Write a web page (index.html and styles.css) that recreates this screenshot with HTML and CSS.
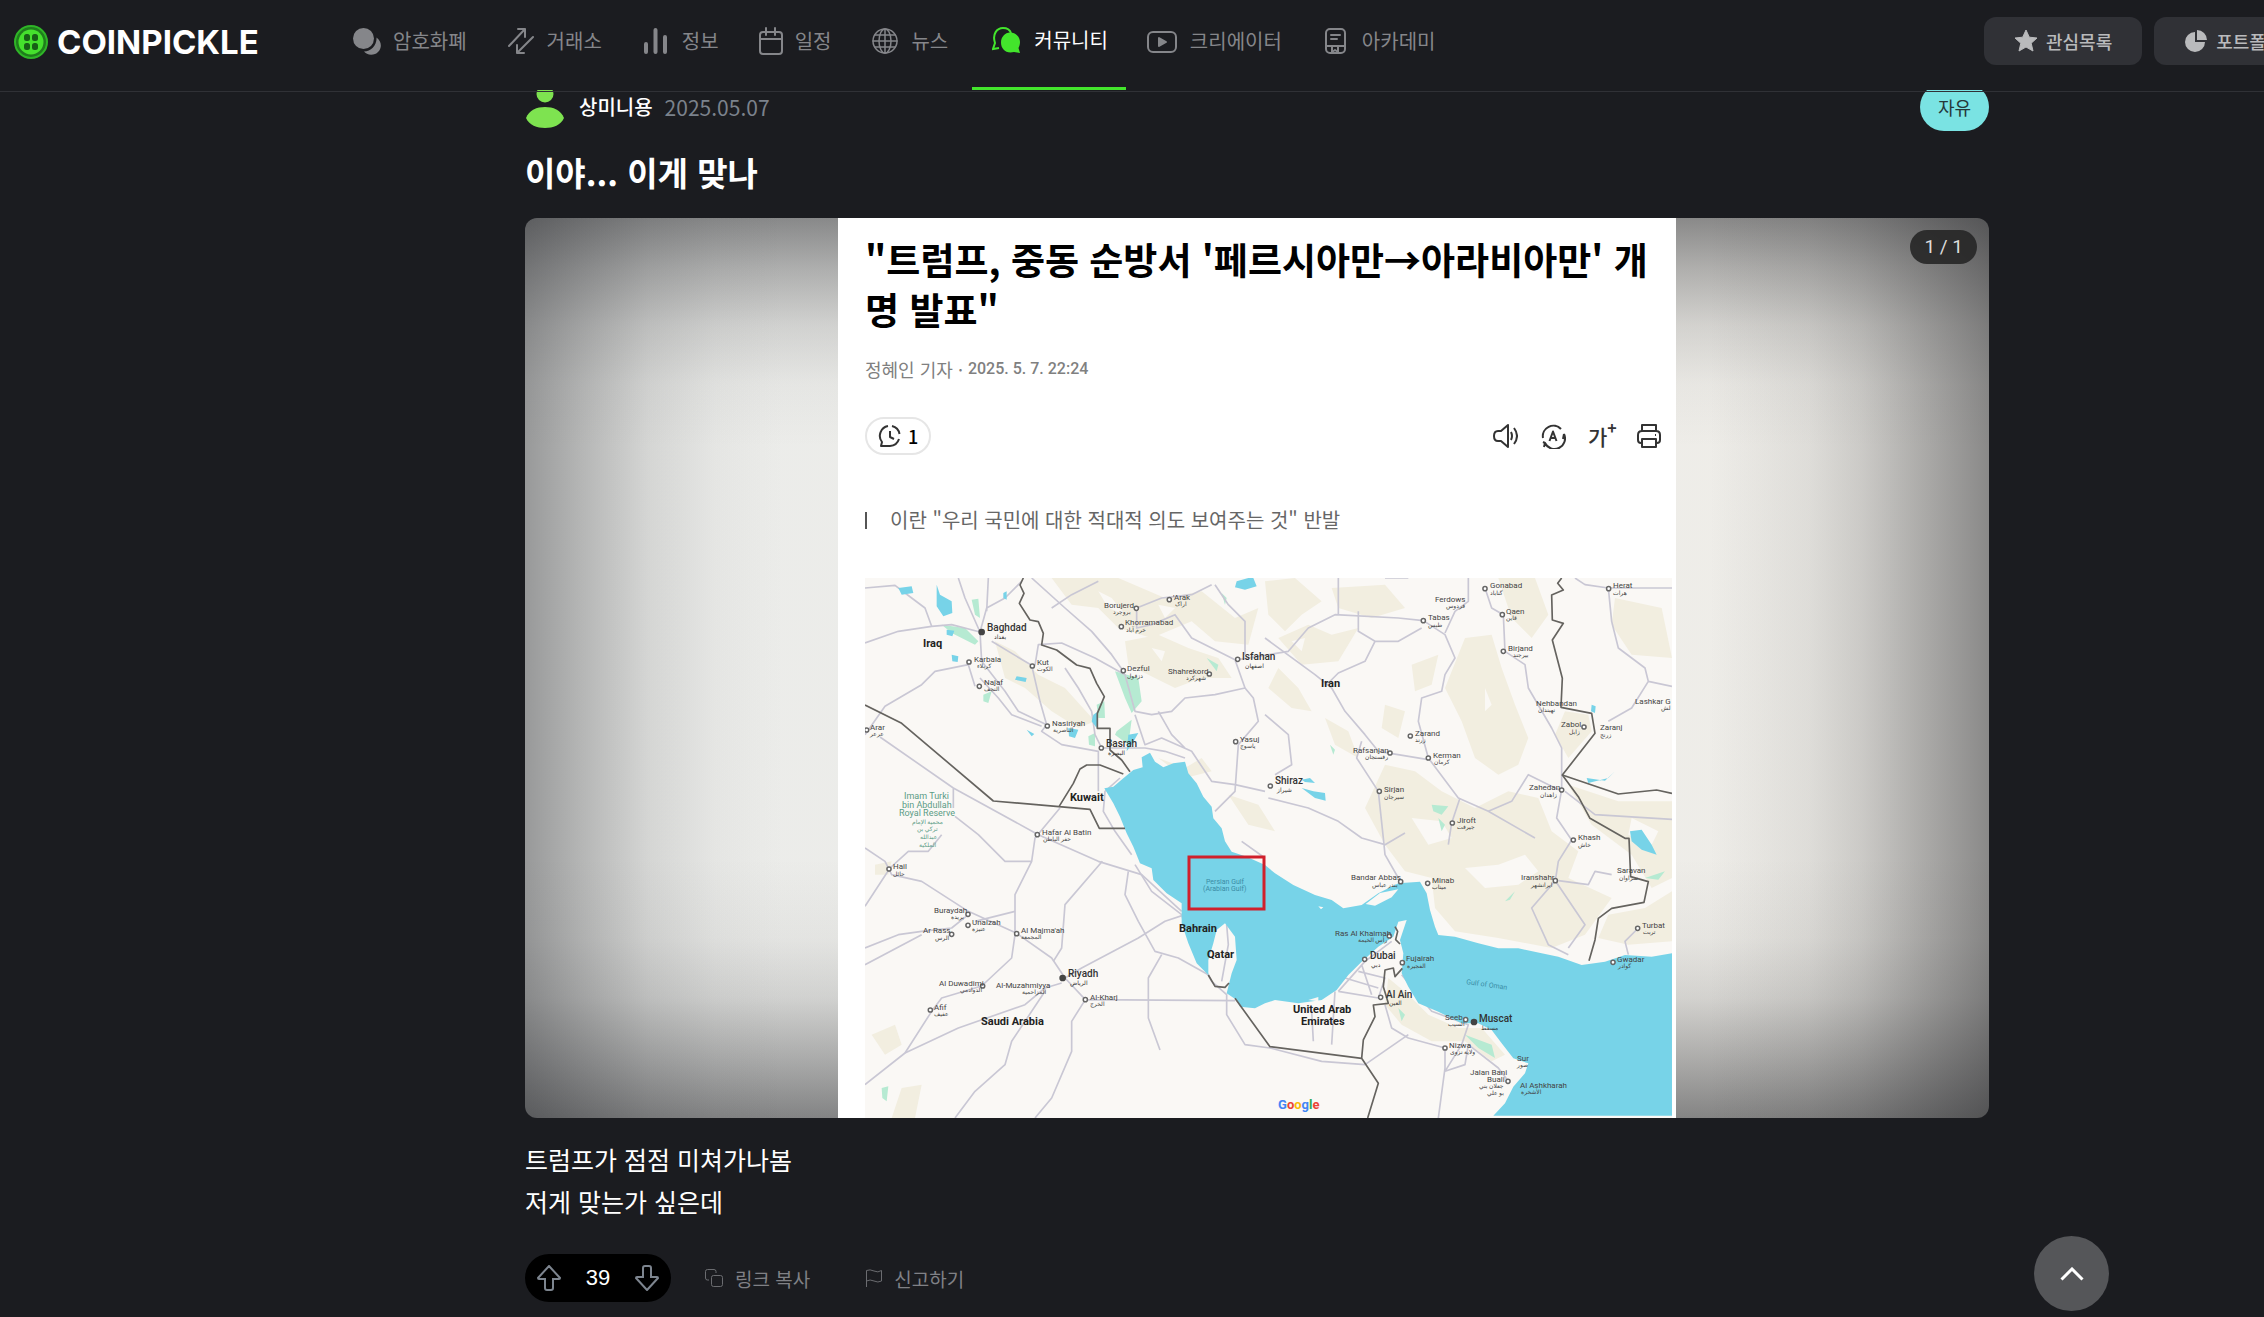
FILE: index.html
```html
<!DOCTYPE html>
<html lang="ko">

<head>
    <meta charset="UTF-8">
    <meta name="viewport" content="width=device-width, initial-scale=1.0">
    <title>이야... 이게 맞나 - COINPICKLE</title>
    <link rel="stylesheet" href="styles.css">
</head>

<body>
    <!-- 상단 메뉴 -->
    <header class="header">
        <a href="#" class="logo">
            <svg width="36" height="36" viewBox="0 0 36 36">
                <circle cx="18" cy="18" r="16" fill="#1f7d1c" stroke="#2fb527" stroke-width="2" />
                <circle cx="18" cy="18" r="12.5" fill="#45e12d" />
                <g fill="#176016">
                    <rect x="11" y="10" width="6" height="7" rx="2.5" />
                    <rect x="19" y="10" width="6" height="7" rx="2.5" />
                    <rect x="11" y="19" width="6" height="7" rx="2.5" />
                    <rect x="19" y="19" width="6" height="7" rx="2.5" />
                </g>
            </svg>
            <span>COINPICKLE</span>
        </a>

        <nav class="gnb">
            <a href="#">
                <svg class="ico" viewBox="0 0 28 28">
                    <ellipse cx="10.500" cy="11.500" rx="10.500" ry="10.500" fill="currentColor" />
                    <path d="M11 24.500C18 24.500 24 18 23.500 10.500C30 15 29 24 22 27C18 28.500 13 27.500 11 24.500Z" fill="currentColor" />
                </svg>
                <span>암호화폐</span>
            </a>
            <a href="#">
                <svg class="ico line" viewBox="0 0 28 28">
                    <path d="M2 19L18 2M11 2H18V10M26 10L10 26M10 18V26H17" />
                </svg>
                <span>거래소</span>
            </a>
            <a href="#">
                <svg class="ico" viewBox="0 0 28 28">
                    <path d="M4 17V25M13.500 3V25M23 10V25" fill="none" stroke="currentColor" stroke-width="4" stroke-linecap="round" />
                </svg>
                <span>정보</span>
            </a>
            <a href="#">
                <svg class="ico line narrow" viewBox="2 0 24 28">
                    <rect x="3" y="5" width="22" height="22" rx="3" />
                    <path d="M3 12H25M9 1V8M18 1V8" />
                </svg>
                <span>일정</span>
            </a>
            <a href="#">
                <svg class="ico line globe" viewBox="0 0 28 28">
                    <circle cx="14" cy="14" r="12" />
                    <ellipse cx="14" cy="14" rx="6" ry="12" />
                    <path d="M14 2V26M2 14H26M4 8H24M4 20H24" />
                </svg>
                <span>뉴스</span>
            </a>
            <a href="#" class="on">
                <svg class="ico" viewBox="0 0 28 28">
                    <path d="M7 22L1 23L3 17C0 8 5 2 11 2C15 2 18 4 19 7" fill="none" stroke="#43e52c" stroke-width="2" />
                    <path d="M18 6.500C24 6.500 28 11 28 16C28 19 27 21 26.500 22L28 27L22 26C14 28 9 23 9 16.500C9 11 13 6.500 18 6.500Z" fill="#43e52c" />
                </svg>
                <span>커뮤니티</span>
            </a>
            <a href="#">
                <svg class="ico line wide" viewBox="-2 0 32 28">
                    <rect x="0" y="5" width="28" height="20" rx="5" />
                    <path d="M11 11V19L18 15Z" fill="currentColor" />
                </svg>
                <span>크리에이터</span>
            </a>
            <a href="#">
                <svg class="ico line" viewBox="0 0 28 28">
                    <rect x="4" y="2" width="19" height="24" rx="4" />
                    <path d="M9 8H18M9 12H15M4 19H23M10 19V25L13 23L16 25V19" />
                </svg>
                <span>아카데미</span>
            </a>
        </nav>

        <div class="user-menu">
            <button type="button">
                <svg width="24" height="24" viewBox="0 0 24 24">
                    <path d="M12 1L15.300 8.200L23 9L17.200 14.200L19 22L12 18L5 22L6.800 14.200L1 9L8.700 8.200Z" fill="#b9babc" stroke="#b9babc" stroke-linejoin="round" />
                </svg>
                <span>관심목록</span>
            </button>
            <button type="button">
                <svg width="24" height="24" viewBox="0 0 24 24">
                    <path d="M11 3A10 10 0 1 0 21 13H11Z" fill="#b9babc" />
                    <path d="M13 1A10 10 0 0 1 23 11H13Z" fill="#b9babc" />
                </svg>
                <span>포트폴리오</span>
            </button>
        </div>
    </header>

    <!-- 게시글 -->
    <main class="post">
        <div class="writer">
            <svg width="40" height="42" viewBox="0 0 40 42" fill="#7ee350">
                <circle cx="20" cy="8" r="8.500" />
                <path d="M1 32C4 24 12 21 20 21S36 24 39 32C36 39 28 42 20 42S4 39 1 32Z" />
            </svg>
            <strong>상미니용</strong>
            <time datetime="2025-05-07">2025.05.07</time>
            <a href="#" class="tag">자유</a>
        </div>

        <h1>이야... 이게 맞나</h1>

        <div class="gallery">
            <span class="count">1 / 1</span>

            <article class="news">
                <h2>"트럼프, 중동 순방서 '페르시아만→아라비아만' 개<br>명 발표"</h2>
                <p class="meta">정혜인 기자 · <span>2025. 5. 7. 22:24</span></p>

                <div class="news-tools">
                    <button type="button" class="reply">
                        <svg width="24" height="24" viewBox="0 0 24 24">
                            <path d="M10 2A10 10 0 0 0 4 18L3 22H12A10 10 0 0 0 21 15M14 2A10 10 0 0 1 21.500 10M12 7V13L16 15" />
                        </svg>
                        <span>1</span>
                    </button>
                    <div class="news-icons">
                        <button type="button" aria-label="음성으로 듣기">
                            <svg width="26" height="26" viewBox="0 0 26 26">
                                <path d="M6 8H9L16 2V24L9 18H6Q2 18 2 13T6 8ZM19 9Q21 13 19 17M22 5Q28 13 22 21" />
                            </svg>
                        </button>
                        <button type="button" aria-label="번역">
                            <svg width="26" height="26" viewBox="0 0 26 26">
                                <path d="M3 15A10.500 10.500 0 0 1 21 6M24 11A10.500 10.500 0 0 1 5 20M3 19L5 20L4 24M23 16L24 11M9.500 18L13 8.500L16.500 18M10.500 15H15.500" />
                            </svg>
                        </button>
                        <button type="button" class="font-size">가<sup>+</sup></button>
                        <button type="button" aria-label="인쇄">
                            <svg width="26" height="26" viewBox="0 0 26 26">
                                <path d="M6 8V2H20V8M6 20H5Q2 20 2 17V12Q2 8 6 8H20Q24 8 24 12V17Q24 20 21 20H20M6 16H20V24H6ZM19 12H20" />
                            </svg>
                        </button>
                    </div>
                </div>

                <p class="quote">이란 "우리 국민에 대한 적대적 의도 보여주는 것" 반발</p>

                <!-- 지도 -->
                <svg class="map" viewBox="0 0 807 540">
                    <g transform="scale(.33333)">
                        <!-- 지형 -->
                        <g fill="#f2eee0">
                            <path d="M560 0L760 0L900 60L1010 40L1110 120L1180 90L1150 200L1050 190L980 130L860 180L760 150L700 90L620 80Z" />
                            <path d="M780 190L880 170L970 210L1060 240L1100 300L1010 300L930 330L850 290L790 260Z" />
                            <path d="M390 190L450 220L520 290L600 330L690 430L640 450L560 400L480 330L420 300Z" />
                            <path d="M1200 10L1290 0L1370 70L1310 110L1260 160L1210 110Z" />
                            <path d="M1240 180L1330 140L1400 170L1480 150L1420 250L1310 260Z" />
                            <path d="M1400 30L1560 20L1620 90L1520 120L1420 90Z" />
                            <path d="M1800 180L1880 170L1910 270L1950 380L1990 480L1960 560L1900 590L1830 540L1790 430L1740 330Z" />
                            <path d="M1560 560L1650 580L1730 640L1830 690L1930 640L2020 660L2060 760L2140 820L2110 900L2240 960L2160 1070L2060 1110L1900 1080L1770 1060L1710 990L1700 900L1620 880L1560 800L1500 690Z" />
                            <path d="M1900 0L2010 0L2050 110L2000 180L1940 120Z" />
                            <path d="M2250 60L2390 90L2421 240L2300 230L2240 140Z" />
                            <path d="M2100 400L2170 410L2180 460L2110 540L2070 470Z" />
                            <path d="M2110 620L2260 670L2421 670V900L2360 930L2300 830L2180 740Z" />
                            <path d="M2230 1010L2340 990L2421 940V1090L2290 1100L2200 1080Z" />
                            <path d="M1570 1200L1630 1250L1690 1310L1780 1350L1850 1350L1920 1430L1880 1450L1800 1390L1700 1390L1610 1340L1560 1280Z" />
                            <path d="M20 1370L90 1340L110 1400L60 1430ZM110 1530L170 1520L150 1620H80ZM30 860L80 850L70 890L30 890Z" />
                            <path d="M1240 270L1300 330L1340 400L1280 390L1210 330ZM1090 650L1180 680L1230 760L1150 740Z" />
                            <path d="M1640 260L1720 230L1700 320L1650 340ZM1380 420L1450 460L1480 540L1410 500ZM1560 380L1620 400L1600 480L1550 450ZM880 540L960 570L1010 540L1040 580L960 600Z" />
                        </g>
                        <g fill="#faf8f5">
                            <path d="M1800 870L1900 860L1980 830L2020 880L1960 920L1860 930Z" />
                            <path d="M1640 720L1730 730L1760 780L1690 800Z" />
                            <path d="M2300 720L2380 760L2360 800L2290 770Z" />
                            <path d="M700 40L740 60L780 110L730 90ZM880 80L930 90L900 120ZM860 210L900 220L890 250ZM1860 330L1880 380L1860 400ZM1280 190L1320 180L1310 220Z" />
                        </g>
                        <!-- 녹지 -->
                        <g fill="#b6ead2">
                            <path d="M320 65L340 62L345 120L330 110ZM750 280L820 300L830 370L800 405L780 360ZM755 460L800 425L790 500L750 470ZM355 350L380 340L370 375L355 370Z" />
                            <path d="M230 140L300 150L340 190L330 200L260 165ZM695 380L718 370L720 420L700 420ZM670 475L690 465L690 505L672 500Z" />
                            <path d="M1700 680L1750 685L1730 710L1705 700ZM1720 720L1740 740L1730 760ZM1920 970L1950 940L1935 965ZM2340 900L2400 880L2380 905ZM1800 1370L1880 1400L1890 1440L1840 1410ZM1600 1290L1620 1310L1610 1330ZM50 1530L70 1525L65 1570L52 1560Z" />
                            <path d="M1395 500L1410 515L1405 530ZM1025 240L1060 260L1055 280ZM1070 45L1085 60L1080 80Z" />
                        </g>
                        <!-- 도로 -->
                        <g class="road">
                            <path d="M0 30L90 22L140 60L180 90L200 145M0 195L100 160L200 145L260 140L345 162L350 250M345 162L365 90L420 60L470 10M345 162L300 60L280 0M370 0L365 100" />
                            <path d="M0 470L60 385L170 320L210 280L310 260L330 325M380 190L500 262L525 370L545 440M350 250L420 340L460 400L545 440L530 460L590 500L700 520L700 640M345 300L400 360L440 410L530 445" />
                            <path d="M510 262L520 200L590 195L690 240L780 290L810 400L860 410L920 400L960 360L1050 350L1140 330L1165 360L1180 430L1120 500L1110 640L1050 700" />
                            <path d="M500 0L600 90L680 160L740 230L775 280M560 90L620 50L700 10M815 90L890 60L980 50L1040 20M815 90L815 150L860 140L930 110L980 180L1110 245L1140 330M1050 20L1090 80L1140 130L1140 230" />
                            <path d="M600 270L640 330L680 400L690 470L710 510L840 510L900 520L960 540M810 410L840 500L890 480L980 520L1040 610L1110 620L1200 640M880 400L920 470L960 510" />
                            <path d="M1120 245L1270 220L1330 150L1410 110L1600 120L1675 128L1740 170L1770 240L1740 290L1730 340L1670 360L1660 430L1690 540L1780 660L1870 700L2010 780" />
                            <path d="M1200 180L1350 290L1400 330L1440 400L1500 470L1540 520L1690 545M1390 315L1420 285L1500 250L1530 190L1600 190L1670 150M1480 100V160L1530 190M1740 165L1770 100L1810 70L1810 0M1420 0L1420 110" />
                            <path d="M1490 490L1475 540L1540 640L1555 780L1560 830L1600 900M1200 410L1270 470L1280 560L1230 590M1210 660L1330 690L1420 730L1490 780L1560 800L1620 765M1785 660L1760 735L1750 800M1870 700L1940 670L1990 590L2090 640" />
                            <path d="M1860 30L1880 90L1915 110L1920 220L1980 260L1990 330L2060 450L2090 510L2090 635L2075 720L2120 786L2080 850L2071 908L2000 990L2050 1100L2110 1130M2071 908L2160 1040L2110 1110" />
                            <path d="M2130 0L2160 20L2230 30L2421 30M2230 30L2240 130L2260 210L2340 270L2350 310L2421 325M2350 310L2300 390L2230 430M2100 640L2190 710L2421 724M2080 908L2170 920L2190 880L2240 890M1630 0L1560 0M2320 1050L2280 1090L2290 1130" />
                            <path d="M45 477L265 630L520 770L700 850L830 890L950 1000M265 630L265 690M585 690L510 780L500 850L450 950L450 1070L440 1140L350 1224M270 715L340 770L420 850L500 850" />
                            <path d="M0 810L60 850L80 890L170 910L310 1000L455 1066L560 1140L600 1200M0 985L75 870L130 820L190 820L230 770M0 1110L100 1070L170 1060L260 1050L310 1010M0 1160L170 1070M330 1030L450 1000" />
                            <path d="M712 850L600 980L590 1110L565 1150M600 1200L650 1170L820 1080L900 1030L960 1010M790 880L780 950L820 1030L870 1120L940 1140L1030 1190M890 1130L850 1200L850 1320L885 1416M590 1215L540 1230L480 1280L280 1350L120 1425L0 1520" />
                            <path d="M350 1224L230 1260L200 1300L120 1425M540 1240L440 1390L420 1460L330 1540L270 1620M600 1200L661 1265L620 1330L620 1420L560 1560L510 1620M661 1265L1110 1268M810 860L860 940L950 1010L970 1080L1040 1210L1085 1250V1310L1140 1400L1215 1410" />
                            <path d="M765 600L720 640L715 700L750 760L800 830M1045 740L1090 830L1130 840M1130 790L1200 840" />
                            <path d="M1420 1240L1500 1150L1580 1090M1420 1240L1540 1260L1560 1200L1480 1180M1440 1200L1540 1230M1490 1160L1520 1250M1410 1240L1400 1400M1560 1280L1580 1350L1630 1380L1740 1410L1740 1470L1720 1620M1610 1190L1700 1300L1810 1340L1790 1400L1740 1480L1800 1460L1810 1400L1900 1470L1930 1510" />
                            <path d="M1340 1300L1345 1390M1215 1410L1370 1450L1500 1460L1630 1370M1085 1040L1090 1100L1070 1210" />
                        </g>
                        <!-- 바다 -->
                        <path fill="#77d3e8" d="M718 631L745 626L775 601L805 576L833 568L830 538L855 524L870 551L895 568L925 556L960 551L970 586L995 616L1015 656L1040 686L1045 721L1070 751L1080 790L1100 821L1145 836L1200 861L1230 886L1285 921L1350 951L1400 966L1435 991L1490 981L1540 946L1600 916L1665 911L1685 946L1695 996L1710 1046L1720 1071L1770 1076L1840 1096L1900 1111L1960 1111L2030 1126L2080 1136L2150 1161L2220 1151L2280 1131L2360 1136L2421 1126V1613H1885L1920 1576L1945 1526L1980 1486L1990 1456L1945 1441L1910 1396L1880 1356L1840 1336L1790 1336L1720 1301L1660 1276L1630 1226L1610 1186L1615 1126L1605 1086L1625 1026L1600 1031L1585 1076L1540 1106L1490 1151L1450 1191L1415 1236L1370 1266L1300 1276L1230 1266L1200 1276L1170 1291L1125 1286L1115 1266L1085 1246L1100 1186L1115 1146L1110 1076L1080 1036L1055 1056L1045 1096L1030 1146V1191L995 1156L970 1096L950 1036V976L905 946L865 906L860 871L825 856L805 806L785 766L765 716L745 676Z" />
                        <g fill="#77d3e8">
                            <path d="M215 20L225 50L260 70L262 105L235 115L215 85ZM100 30L140 25L145 45L110 50ZM245 155L268 158L262 175L245 170ZM260 230L280 235L278 252L262 250ZM455 295L485 300L482 312L450 305ZM485 455L508 468L500 475ZM415 45L425 40L425 65L415 60Z" />
                            <path d="M685 410L700 400L695 450L680 430ZM610 450L640 455L630 480L612 475ZM790 470L820 465L800 500L785 520ZM1115 10L1150 0H1165L1175 25L1140 35L1110 28Z" />
                            <path d="M1310 605L1335 600L1350 615L1320 612ZM1310 630L1345 640L1380 645L1382 668L1350 660ZM2180 380L2192 385L2190 405L2178 400ZM2165 600L2220 608L2250 580L2230 600L2170 615ZM2295 760L2330 755L2360 800L2375 830L2330 815L2300 790Z" />
                        </g>
                        <g fill="#faf8f5">
                            <path d="M1502 978L1545 945L1600 934L1580 958L1530 983ZM1330 1266L1360 1257V1270ZM1360 985L1375 988L1368 994Z" />
                        </g>
                        <!-- 국경 -->
                        <g class="border">
                            <path d="M0 381L110 436L385 669L582 686L675 694L703 751H780M582 686L625 616L645 573L665 561H705L775 588" />
                            <path d="M475 0L465 21L477 46L463 76L495 126L520 131L535 166L530 201L575 216L635 261L675 271L695 316L718 356L697 406V451H735V516L770 546L795 581" />
                            <path d="M2090 0L2078 16L2095 36L2060 51L2062 126L2095 136L2062 186L2092 301L2088 388L2180 406L2190 466L2092 591L2260 648L2375 636L2421 646" />
                            <path d="M2092 591L2140 656L2175 721L2280 781H2292L2297 896L2350 911L2337 973L2240 991L2200 1021L2190 1086L2172 1148" />
                            <path d="M1110 1261L1215 1406L1490 1441L1495 1386L1530 1316L1525 1281L1570 1276L1555 1226L1560 1176L1585 1170L1590 1196L1612 1171M1490 1441L1540 1516L1508 1620M1590 1046L1598 1060L1592 1085L1605 1098M1030 1191L1050 1225L1080 1228L1092 1215" />
                        </g>
                        <!-- 도시 -->
                        <path class="dot" d="M343 325h0M502 264h0M547 444h0M709 510h0M312 252h0M814 91h0M769 146h0M913 65h0M775 278h0M1033 288h0M1118 244h0M1112 491h0M517 770h0M5 456h0M1675 128h0M1860 32h0M2231 32h0M1915 220h0M1912 110h0M2157 447h0M1636 474h0M1575 525h0M1690 540h0M1216 624h0M1543 640h0M1762 735h0M2090 636h0M2125 786h0M72 873h0M309 1009h0M309 1042h0M260 1069h0M455 1067h0M353 1224h0M661 1265h0M196 1296h0M1607 911h0M1688 916h0M2071 908h0M2318 1051h0M2244 1153h0M1573 1074h0M1499 1144h0M1612 1154h0M1547 1258h0M1802 1325h0M1740 1410h0M1929 1510h0" />
                        <path class="dot-in" d="M343 325h0M502 264h0M547 444h0M709 510h0M312 252h0M814 91h0M769 146h0M913 65h0M775 278h0M1033 288h0M1118 244h0M1112 491h0M517 770h0M5 456h0M1675 128h0M1860 32h0M2231 32h0M1915 220h0M1912 110h0M2157 447h0M1636 474h0M1575 525h0M1690 540h0M1216 624h0M1543 640h0M1762 735h0M2090 636h0M2125 786h0M72 873h0M309 1009h0M309 1042h0M260 1069h0M455 1067h0M353 1224h0M661 1265h0M196 1296h0M1607 911h0M1688 916h0M2071 908h0M2318 1051h0M2244 1153h0M1573 1074h0M1499 1144h0M1612 1154h0M1547 1258h0M1802 1325h0M1740 1410h0M1929 1510h0" />
                        <path class="capital" d="M350 162h0M593 1200h0M1827 1332h0" />
                    </g>

                    <rect x="324" y="279" width="75" height="52" fill="none" stroke="#d0202c" stroke-width="3" />

                    <g class="country">
                        <text x="58" y="69">Iraq</text>
                        <text x="205" y="223">Kuwait</text>
                        <text x="456" y="109">Iran</text>
                        <text x="116" y="447">Saudi Arabia</text>
                        <text x="314" y="354">Bahrain</text>
                        <text x="342" y="380">Qatar</text>
                        <text x="428" y="435">United Arab</text>
                        <text x="436" y="447">Emirates</text>
                    </g>
                    <g class="city big">
                        <text x="122" y="53">Baghdad<tspan x="129" dy="8">بغداد</tspan></text>
                        <text x="241" y="169">Basrah<tspan x="243" dy="8">البصرة</tspan></text>
                        <text x="377" y="82">Isfahan<tspan x="380" dy="8">اصفهان</tspan></text>
                        <text x="410" y="206">Shiraz<tspan x="412" dy="8">شیراز</tspan></text>
                        <text x="203" y="399">Riyadh<tspan x="205" dy="8">الرياض</tspan></text>
                        <text x="505" y="381">Dubai<tspan x="506" dy="8">دبي</tspan></text>
                        <text x="521" y="420">Al Ain<tspan x="524" dy="7">العين</tspan></text>
                        <text x="614" y="444">Muscat<tspan x="616" dy="8">مسقط</tspan></text>
                    </g>
                    <g class="city">
                        <text x="109" y="84">Karbala<tspan x="112" dy="6">كربلاء</tspan></text>
                        <text x="119" y="107">Najaf<tspan x="119" dy="6">النجف</tspan></text>
                        <text x="172" y="87">Kut<tspan x="172" dy="6">الكوت</tspan></text>
                        <text x="187" y="148">Nasiriyah<tspan x="188" dy="6">الناصرية</tspan></text>
                        <text x="5" y="152">Arar<tspan x="5" dy="6">عرعر</tspan></text>
                        <text x="239" y="30">Borujerd<tspan x="248" dy="6">بروجرد</tspan></text>
                        <text x="260" y="47">Khorramabad<tspan x="261" dy="7">خرم آباد</tspan></text>
                        <text x="308" y="22">'Arak<tspan x="310" dy="6">اراک</tspan></text>
                        <text x="262" y="93">Dezful<tspan x="262" dy="7">دزفول</tspan></text>
                        <text x="303" y="96">Shahrekord<tspan x="321" dy="6">شهرکرد</tspan></text>
                        <text x="375" y="164">Yasuj<tspan x="375" dy="6">یاسوج</tspan></text>
                        <text x="177" y="257">Hafar Al Batin<tspan x="178" dy="6">حفر الباطن</tspan></text>
                        <text x="570" y="24">Ferdows<tspan x="581" dy="6">فردوس</tspan></text>
                        <text x="625" y="10">Gonabad<tspan x="625" dy="7">گناباد</tspan></text>
                        <text x="641" y="36">Qaen<tspan x="641" dy="6">قاین</tspan></text>
                        <text x="563" y="42">Tabas<tspan x="563" dy="7">طبس</tspan></text>
                        <text x="643" y="73">Birjand<tspan x="648" dy="6">بیرجند</tspan></text>
                        <text x="748" y="10">Herat<tspan x="748" dy="7">هرات</tspan></text>
                        <text x="671" y="128">Nehbandan<tspan x="673" dy="6">نهبندان</tspan></text>
                        <text x="770" y="126">Lashkar G<tspan x="796" dy="6">لش</tspan></text>
                        <text x="696" y="149">Zabol<tspan x="704" dy="7">زابل</tspan></text>
                        <text x="735" y="152">Zaranj<tspan x="735" dy="7">زرنج</tspan></text>
                        <text x="550" y="158">Zarand<tspan x="550" dy="6">زرند</tspan></text>
                        <text x="488" y="175">Rafsanjan<tspan x="500" dy="6">رفسنجان</tspan></text>
                        <text x="568" y="180">Kerman<tspan x="569" dy="6">کرمان</tspan></text>
                        <text x="519" y="214">Sirjan<tspan x="519" dy="7">سیرجان</tspan></text>
                        <text x="592" y="245">Jiroft<tspan x="592" dy="6">جیرفت</tspan></text>
                        <text x="664" y="212">Zahedan<tspan x="675" dy="7">زاهدان</tspan></text>
                        <text x="713" y="262">Khash<tspan x="713" dy="7">خاش</tspan></text>
                        <text x="28" y="291">Hail<tspan x="28" dy="7">حائل</tspan></text>
                        <text x="69" y="335">Buraydah<tspan x="86" dy="6">بريدة</tspan></text>
                        <text x="107" y="347">Unaizah<tspan x="107" dy="6">عنيزة</tspan></text>
                        <text x="58" y="355">Ar Rass<tspan x="70" dy="7">الرس</tspan></text>
                        <text x="156" y="355">Al Majma'ah<tspan x="156" dy="6">المجمعة</tspan></text>
                        <text x="74" y="408">Al Duwadimi<tspan x="95" dy="6">الدوادمي</tspan></text>
                        <text x="131" y="410">Al-Muzahmiyya<tspan x="157" dy="6">المزاحمية</tspan></text>
                        <text x="225" y="422">Al-Kharj<tspan x="225" dy="6">الخرج</tspan></text>
                        <text x="69" y="432">Afif<tspan x="69" dy="6">عفيف</tspan></text>
                        <text x="486" y="302">Bandar Abbas<tspan x="507" dy="7">بندر عباس</tspan></text>
                        <text x="567" y="305">Minab<tspan x="567" dy="6">میناب</tspan></text>
                        <text x="656" y="302">Iranshahr<tspan x="666" dy="7">ایرانشهر</tspan></text>
                        <text x="752" y="295">Saravan<tspan x="754" dy="7">سراوان</tspan></text>
                        <text x="777" y="350">Turbat<tspan x="778" dy="6">تربت</tspan></text>
                        <text x="752" y="384">Gwadar<tspan x="753" dy="6">گوادر</tspan></text>
                        <text x="470" y="358">Ras Al Khaimah<tspan x="493" dy="6">رأس الخيمة</tspan></text>
                        <text x="541" y="383">Fujairah<tspan x="542" dy="7">الفجيرة</tspan></text>
                        <text x="580" y="442">Seeb<tspan x="583" dy="6">السيب</tspan></text>
                        <text x="584" y="470">Nizwa<tspan x="585" dy="6">ولاية نزوى</tspan></text>
                        <text x="652" y="483">Sur<tspan x="652" dy="6">صور</tspan></text>
                        <text x="605" y="497">Jalan Bani</text>
                        <text x="622" y="504">Buali<tspan x="614" dy="6">جعلان بني</tspan><tspan x="622" dy="7">بو علي</tspan></text>
                        <text x="655" y="510">Al Ashkharah<tspan x="656" dy="6">الأشخرة</tspan></text>
                    </g>
                    <g class="reserve">
                        <text x="39" y="221">Imam Turki</text>
                        <text x="37" y="230">bin Abdullah</text>
                        <text x="34" y="238">Royal Reserve</text>
                        <text x="47" y="246" class="ar">محمية الإمام</text>
                        <text x="52" y="253" class="ar">تركي بن</text>
                        <text x="55" y="261" class="ar">عبدالله</text>
                        <text x="54" y="269" class="ar">الملكية</text>
                    </g>
                    <g class="sea">
                        <text x="341" y="306">Persian Gulf</text>
                        <text x="338" y="313">(Arabian Gulf)</text>
                        <text x="601" y="406" transform="rotate(8 601 406)">Gulf of Oman</text>
                    </g>
                    <text x="413" y="531" class="google"><tspan fill="#4285f4">G</tspan><tspan fill="#ea4335">o</tspan><tspan fill="#fbbc05">o</tspan><tspan fill="#4285f4">g</tspan><tspan fill="#34a853">l</tspan><tspan fill="#ea4335">e</tspan></text>
                </svg>
            </article>
        </div>

        <p class="txt">트럼프가 점점 미쳐가나봄<br>저게 맞는가 싶은데</p>

        <div class="actions">
            <div class="vote">
                <button type="button" aria-label="추천">
                    <svg width="24" height="26" viewBox="0 0 24 26">
                        <path d="M12 1L23 13Q23 14 22 14H16V23Q16 25 14 25H10Q8 25 8 23V14H2Q1 14 1 13Z" />
                    </svg>
                </button>
                <span>39</span>
                <button type="button" aria-label="비추천">
                    <svg width="24" height="26" viewBox="0 0 24 26">
                        <path d="M12 25L23 13Q23 12 22 12H16V3Q16 1 14 1H10Q8 1 8 3V12H2Q1 12 1 13Z" />
                    </svg>
                </button>
            </div>
            <button type="button" class="act copy">
                <svg width="18" height="18" viewBox="0 0 18 18">
                    <rect x="6.500" y="6.500" width="11" height="11" rx="2" />
                    <path d="M4 11H2.500Q.5 11 .5 9V2.500Q.5 .5 2.500 .5H9Q11 .5 11 2.500V4" />
                </svg>
                <span>링크 복사</span>
            </button>
            <button type="button" class="act">
                <svg width="16" height="18" viewBox="0 0 16 18">
                    <path d="M.5 18V1.500Q4 0 8 2T15.500 1.500V12Q12 14 8 12T.5 12" />
                </svg>
                <span>신고하기</span>
            </button>
        </div>
    </main>

    <button type="button" class="top" aria-label="맨 위로">
        <svg width="24" height="14" viewBox="0 0 24 14">
            <path d="M1.500 12.500L12 2L22.500 12.500" fill="none" stroke="#fff" stroke-width="3" />
        </svg>
    </button>
</body>

</html>
```
FILE: styles.css
```css
/* 초기화 */
* {
    box-sizing: border-box;
    margin: 0;
    padding: 0;
}

body {
    background: #1b1c20;
    color: #fff;
    font-family: "Noto Sans CJK KR", "Noto Sans", sans-serif;
    overflow-x: hidden;
}

a {
    color: inherit;
    text-decoration: none;
}

button {
    border: 0;
    background: none;
    color: inherit;
    font: inherit;
    cursor: pointer;
}

svg {
    display: block;
    flex-shrink: 0;
}

/* 상단 메뉴 */
.header {
    position: fixed;
    top: 0;
    left: 0;
    right: 0;
    z-index: 10;
    display: flex;
    height: 90px;
    padding-left: 13px;
    background: #1b1c20;
    white-space: nowrap;
}

/* 하단 구분선 */
.header::after {
    content: "";
    position: absolute;
    left: 0;
    right: 0;
    bottom: -2px;
    height: 1px;
    background: #303136;
}

.logo {
    display: flex;
    flex: 0 0 320px;
    align-items: center;
    gap: 8px;
    padding-bottom: 6px;
    font: 700 33px/36px Inter, sans-serif;
}

.gnb {
    display: flex;
}

.gnb a {
    display: flex;
    align-items: center;
    gap: 12px;
    padding: 0 20px 5px;
    border-bottom: 3px solid transparent;
    color: #85868a;
    font-size: 20px;
    line-height: 30px;
}

.gnb .on {
    gap: 14px;
    margin-left: 4px;
    padding: 0 18px 7px 20px;
    border-color: #43e52c;
    color: #fff;
}

.ico {
    width: 28px;
    height: 28px;
}

.narrow {
    width: 24px;
}

.wide {
    width: 32px;
}

.line {
    fill: none;
    stroke: currentColor;
    stroke-width: 2;
    stroke-linecap: round;
    stroke-linejoin: round;
}

.globe {
    stroke-width: 1.5;
}

/* 오른쪽 버튼 (화면 밖은 잘림) */
.user-menu {
    display: flex;
    flex: 0 0 280px;
    gap: 12px;
    margin-left: auto;
    padding-top: 17px;
    overflow: hidden;
}

.user-menu button {
    display: flex;
    flex-shrink: 0;
    align-items: center;
    gap: 8px;
    height: 48px;
    padding: 0 30px;
    border-radius: 12px;
    background: #303136;
    color: #b9babc;
    font-size: 18px;
    font-weight: 500;
}

/* 게시글 */
.post {
    padding: 83px 275px 15px 525px;
}

.writer {
    display: flex;
    align-items: center;
    height: 48px;
    font-size: 20px;
    line-height: 30px;
}

.writer strong {
    margin-left: 14px;
    font-weight: 500;
}

.writer time {
    margin-left: 12px;
    color: #7b828c;
    font-size: 21px;
}

.tag {
    margin-left: auto;
    padding: 0 18px;
    border-radius: 24px;
    background: #7ae3e3;
    color: #26383a;
    font-size: 18px;
    line-height: 48px;
}

.post h1 {
    margin: 17px 0 22px;
    font-size: 33px;
    line-height: 48px;
}

/* 이미지 영역 : 가장자리로 갈수록 어두워짐 */
.gallery {
    position: relative;
    display: flex;
    justify-content: center;
    border-radius: 12px;
    overflow: hidden;
    background:
        linear-gradient(to right, rgba(27, 28, 32, .40) 0, rgba(27, 28, 32, .26) 57px, rgba(27, 28, 32, .11) 123px, rgba(27, 28, 32, .03) 190px, transparent 260px),
        linear-gradient(to left, rgba(27, 28, 32, .48) 0, rgba(27, 28, 32, .33) 61px, rgba(27, 28, 32, .17) 127px, rgba(27, 28, 32, .08) 180px, transparent 280px),
        linear-gradient(to bottom, rgba(27, 28, 32, .48) 0, rgba(27, 28, 32, .30) 49px, rgba(27, 28, 32, .13) 107px, rgba(27, 28, 32, .03) 166px, transparent 230px),
        linear-gradient(to top, rgba(27, 28, 32, .50) 0, rgba(27, 28, 32, .31) 60px, rgba(27, 28, 32, .13) 120px, rgba(27, 28, 32, .04) 180px, transparent 260px),
        linear-gradient(to right, #ebecea, #efede8);
}

.count {
    position: absolute;
    top: 12px;
    right: 12px;
    padding: 0 14px;
    border-radius: 17px;
    background: rgba(38, 38, 38, .9);
    color: #ddd;
    font-family: Roboto, sans-serif;
    font-size: 19px;
    line-height: 34px;
}

/* 뉴스 캡쳐 */
.news {
    flex: 0 1 838px;
    padding: 16px 4px 0 27px;
    background: #fff;
    color: #000;
}

.news h2 {
    font-size: 37px;
    line-height: 50px;
    white-space: nowrap;
}

.meta {
    display: flex;
    align-items: center;
    gap: 5px;
    height: 24px;
    margin-top: 23px;
    color: #808080;
    font-size: 18px;
    line-height: 24px;
}

.meta span {
    font-family: Roboto, sans-serif;
    font-size: 16px;
    font-weight: 500;
}

.news-tools {
    display: flex;
    align-items: center;
    justify-content: space-between;
    margin: 36px 10px 53px 0;
}

.news-tools svg {
    fill: none;
    stroke: #333;
    stroke-width: 2;
    stroke-linejoin: round;
}

.reply {
    display: flex;
    align-items: center;
    gap: 6px;
    height: 38px;
    padding: 0 11px;
    border: 2px solid #e6e6e6;
    border-radius: 19px;
    font-size: 18px;
    font-weight: 500;
}

.news-icons {
    display: flex;
    align-items: center;
    gap: 22px;
}

.news-icons button {
    width: 26px;
    height: 26px;
}

.font-size {
    display: flex;
    color: #333;
    font-size: 21px;
    font-weight: 500;
    line-height: 26px;
}

.font-size sup {
    font-size: 16px;
    font-weight: 700;
    line-height: 8px;
}

.quote {
    display: flex;
    align-items: center;
    color: #666;
    font-size: 20px;
    line-height: 24px;
}

.quote::before {
    content: "";
    width: 2px;
    height: 17px;
    margin-right: 23px;
    background: #555;
}

/* 지도 */
.map {
    width: 100%;
    margin-top: 46px;
    background: #faf8f5;
    font-family: Roboto, "DejaVu Sans", sans-serif;
}

.road,
.border {
    fill: none;
    stroke: #c9c7d4;
    stroke-width: 5;
    stroke-linejoin: round;
}

.border {
    stroke: #65635f;
}

.dot,
.dot-in,
.capital {
    fill: none;
    stroke: #666;
    stroke-width: 17;
    stroke-linecap: round;
}

.dot-in {
    stroke: #fff;
    stroke-width: 8;
}

.capital {
    stroke: #444;
    stroke-width: 20;
}

.country {
    fill: #222;
    font-size: 11px;
    font-weight: 700;
}

.city {
    fill: #444;
    font-size: 8px;
}

.city tspan,
.ar {
    font-size: 6px;
}

.big {
    fill: #333;
    font-size: 10px;
    font-weight: 500;
}

.reserve {
    fill: #5a9c86;
    font-size: 9px;
}

.sea {
    fill: #3a8ca5;
    font-size: 7px;
}

.google {
    font-size: 13px;
    font-weight: 700;
}

/* 본문 */
.txt {
    margin: 20px 0 32px;
    font-size: 25px;
    line-height: 42px;
}

.actions {
    display: flex;
    align-items: center;
    color: #808186;
    font-size: 19px;
}

.actions svg {
    fill: none;
    stroke: #6b6c70;
}

.vote {
    display: flex;
    align-items: center;
    justify-content: space-between;
    width: 146px;
    height: 48px;
    padding: 0 12px;
    border-radius: 24px;
    background: #000;
    color: #fff;
    font-family: "Liberation Sans", sans-serif;
    font-size: 22px;
}

.vote svg {
    stroke: #7d858f;
    stroke-width: 2;
}

.act {
    display: flex;
    align-items: center;
    gap: 12px;
    margin-left: 56px;
}

.copy {
    margin-left: 34px;
}

/* 맨 위로 */
.top {
    position: fixed;
    right: 155px;
    bottom: 6px;
    display: flex;
    align-items: center;
    justify-content: center;
    width: 75px;
    height: 75px;
    border-radius: 50%;
    background: #555659;
}
```
